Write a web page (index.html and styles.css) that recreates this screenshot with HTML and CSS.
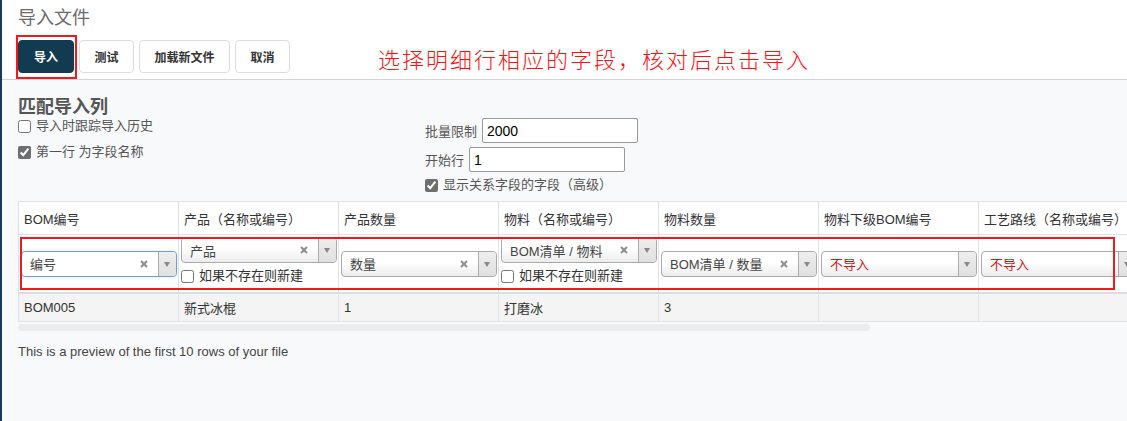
FILE: index.html
```html
<!DOCTYPE html>
<html lang="zh-CN">
<head>
<meta charset="utf-8">
<title>导入文件</title>
<link rel="stylesheet" href="styles.css">
</head>
<body>
<div class="page">
  <header class="top">
    <h1 class="title">导入文件</h1>
    <div class="toolbar">
      <button class="btn btn-primary">导入</button>
      <button class="btn">测试</button>
      <button class="btn">加载新文件</button>
      <button class="btn">取消</button>
    </div>
    <div class="mark mark-btn"></div>
    <div class="note">选择明细行相应的字段，核对后点击导入</div>
  </header>
  <main class="content">
    <h2 class="section">匹配导入列</h2>
    <div class="options">
      <div class="opt-left">
        <label class="check"><input type="checkbox"><span>导入时跟踪导入历史</span></label>
        <label class="check"><input type="checkbox" checked><span>第一行 为字段名称</span></label>
      </div>
      <div class="opt-right">
        <div class="field"><span>批量限制</span><input class="text" type="text" value="2000"></div>
        <div class="field"><span>开始行</span><input class="text" type="text" value="1"></div>
        <label class="check"><input type="checkbox" checked><span>显示关系字段的字段（高级）</span></label>
      </div>
    </div>
    <div class="table-wrap">
      <table class="grid">
        <colgroup>
          <col><col><col><col><col><col><col>
        </colgroup>
        <thead>
          <tr class="head">
            <th>BOM编号</th>
            <th>产品（名称或编号）</th>
            <th>产品数量</th>
            <th>物料（名称或编号）</th>
            <th>物料数量</th>
            <th>物料下级BOM编号</th>
            <th>工艺路线（名称或编号）</th>
          </tr>
          <tr class="map">
            <td>
              <div class="sel focus"><span class="sel-val">编号</span><span class="sel-x"><svg width="8" height="8" viewBox="0 0 8 8"><path d="M1 1L7 7M7 1L1 7" stroke="#8c8c8c" stroke-width="2"/></svg></span><span class="sel-arrow"></span></div>
            </td>
            <td>
              <div class="stack">
                <div class="sel"><span class="sel-val">产品</span><span class="sel-x"><svg width="8" height="8" viewBox="0 0 8 8"><path d="M1 1L7 7M7 1L1 7" stroke="#8c8c8c" stroke-width="2"/></svg></span><span class="sel-arrow"></span></div>
                <label class="check sub"><input type="checkbox"><span>如果不存在则新建</span></label>
              </div>
            </td>
            <td>
              <div class="sel"><span class="sel-val">数量</span><span class="sel-x"><svg width="8" height="8" viewBox="0 0 8 8"><path d="M1 1L7 7M7 1L1 7" stroke="#8c8c8c" stroke-width="2"/></svg></span><span class="sel-arrow"></span></div>
            </td>
            <td>
              <div class="stack">
                <div class="sel"><span class="sel-val">BOM清单 / 物料</span><span class="sel-x"><svg width="8" height="8" viewBox="0 0 8 8"><path d="M1 1L7 7M7 1L1 7" stroke="#8c8c8c" stroke-width="2"/></svg></span><span class="sel-arrow"></span></div>
                <label class="check sub"><input type="checkbox"><span>如果不存在则新建</span></label>
              </div>
            </td>
            <td>
              <div class="sel"><span class="sel-val">BOM清单 / 数量</span><span class="sel-x"><svg width="8" height="8" viewBox="0 0 8 8"><path d="M1 1L7 7M7 1L1 7" stroke="#8c8c8c" stroke-width="2"/></svg></span><span class="sel-arrow"></span></div>
            </td>
            <td>
              <div class="sel"><span class="sel-val skip">不导入</span><span class="sel-arrow"></span></div>
            </td>
            <td>
              <div class="sel"><span class="sel-val skip">不导入</span><span class="sel-arrow"></span></div>
            </td>
          </tr>
        </thead>
        <tbody>
          <tr class="data">
            <td>BOM005</td>
            <td>新式冰棍</td>
            <td>1</td>
            <td>打磨冰</td>
            <td>3</td>
            <td></td>
            <td></td>
          </tr>
        </tbody>
      </table>
      <div class="mark mark-row"></div>
    </div>
    <div class="scroll-thumb"></div>
    <p class="preview">This is a preview of the first 10 rows of your file</p>
  </main>
</div>
</body>
</html>
```
FILE: styles.css
```css
* {
  box-sizing: border-box;
}

html,
body {
  margin: 0;
  height: 100%;
}

body {
  font-family: "Liberation Sans", "Noto Sans CJK SC", sans-serif;
  font-size: 13px;
  color: #444;
  overflow: hidden;
  background: #f8f9fa;
}

.page {
  width: 1127px;
  min-height: 100%;
  border-left: 2px solid #173c54;
  background: #f8f9fa;
  overflow: hidden;
}

/* ---------- top bar ---------- */
.top {
  position: relative;
  height: 80px;
  padding: 6px 16px 0;
  background: #fff;
  border-bottom: 1px solid #d4d4d4;
}

.title {
  margin: 0;
  font-size: 18px;
  line-height: 24px;
  font-weight: normal;
  color: #6b6b6b;
}

.toolbar {
  display: flex;
  gap: 5px;
  margin-top: 10px;
}

.btn {
  height: 33px;
  padding: 0 14.5px;
  border: 1px solid #ddd;
  border-radius: 4px;
  background: #fff;
  font-family: "Liberation Sans", "Noto Sans CJK SC", sans-serif;
  font-size: 12px;
  font-weight: bold;
  color: #333;
}

.btn-primary {
  padding: 0 15px;
  background: #123a51;
  border-color: #123a51;
  color: #fff;
}

.mark {
  position: absolute;
  border: 2px solid #f01a1a;
  pointer-events: none;
}

.mark-btn {
  left: 14px;
  top: 35px;
  width: 61px;
  height: 44px;
}

.note {
  position: absolute;
  left: 376px;
  top: 44px;
  font-family: "Noto Sans CJK SC", sans-serif;
  font-weight: 300;
  font-size: 22px;
  line-height: 28px;
  letter-spacing: 2px;
  color: #ff1010;
}

/* ---------- content ---------- */
.content {
  padding: 17px 16px 0;
}

.section {
  margin: 0;
  font-size: 18px;
  line-height: 20px;
  font-weight: bold;
  color: #555;
}

.options {
  display: flex;
  align-items: flex-start;
  height: 81px;
}

.opt-left {
  width: 407px;
  display: flex;
  flex-direction: column;
  gap: 8px;
}

.opt-right {
  padding-top: 1px;
  display: flex;
  flex-direction: column;
}

.check {
  display: flex;
  align-items: center;
  gap: 5px;
  height: 18px;
  line-height: 18px;
  color: #555;
}

.check input {
  margin: 0;
  width: 13px;
  height: 13px;
  accent-color: #6e6e6e;
}

.opt-right .check {
  height: 16px;
  margin-top: 1px;
}

.field {
  display: flex;
  align-items: center;
  gap: 5px;
  height: 25px;
  margin-bottom: 4px;
  color: #555;
}

.text {
  width: 156px;
  height: 25px;
  margin: 0;
  padding: 0 4px;
  border: 1px solid #999;
  border-radius: 2px;
  font-family: "Liberation Sans", sans-serif;
  font-size: 14px;
  color: #000;
  background: #fff;
}

/* ---------- table ---------- */
.table-wrap {
  position: relative;
  margin-top: 3px;
  width: 1120px;
}

.grid {
  border-collapse: collapse;
  table-layout: fixed;
  width: 1120px;
  background: #fff;
}

.grid col {
  width: 160px;
}

.grid th,
.grid td {
  border: 1px solid #e0e2e7;
}

.head th {
  height: 33px;
  padding: 0 5px;
  text-align: left;
  font-weight: normal;
  color: #333;
  white-space: nowrap;
}

.map td {
  height: 58px;
  padding: 2px 1px 2px 2px;
  vertical-align: middle;
  border-bottom: 2px solid #dcdde2;
}

.stack {
  display: flex;
  flex-direction: column;
  padding-bottom: 5px;
}

.check.sub {
  margin-top: 4px;
  height: 18px;
  color: #333;
}

.sel {
  display: flex;
  align-items: center;
  height: 26px;
  border: 1px solid #aaa;
  border-radius: 4px;
  background: linear-gradient(#fff 45%, #ececec);
  white-space: nowrap;
}

.sel.focus {
  border-color: #6a9fe6;
  box-shadow: 0 0 3px rgba(0, 0, 0, 0.12);
  background: #fff;
}

.sel-val {
  flex: 1;
  padding-left: 8px;
  color: #444;
  overflow: hidden;
}

.sel-val.skip {
  color: #e41010;
}

.sel-x {
  display: flex;
  align-items: center;
  margin-right: 10px;
}

.sel-arrow {
  position: relative;
  width: 18px;
  height: 100%;
  border-left: 1px solid #aaa;
  border-radius: 0 4px 4px 0;
  background: linear-gradient(#eee, #e0e0e0);
}

.sel-arrow::after {
  content: "";
  position: absolute;
  left: 5px;
  top: 10px;
  border-left: 3.5px solid transparent;
  border-right: 3.5px solid transparent;
  border-top: 5px solid #888;
}

.data td {
  height: 28px;
  padding: 0 5px;
  background: #f4f4f4;
  color: #333;
}

.mark-row {
  left: 2px;
  top: 36px;
  width: 1095px;
  height: 53px;
}

.scroll-thumb {
  width: 852px;
  height: 7px;
  margin-top: 2px;
  border-radius: 4px;
  background: #ebecef;
}

.preview {
  margin: 13px 0 0;
  font-size: 13px;
  line-height: 16px;
  color: #444;
}
```
